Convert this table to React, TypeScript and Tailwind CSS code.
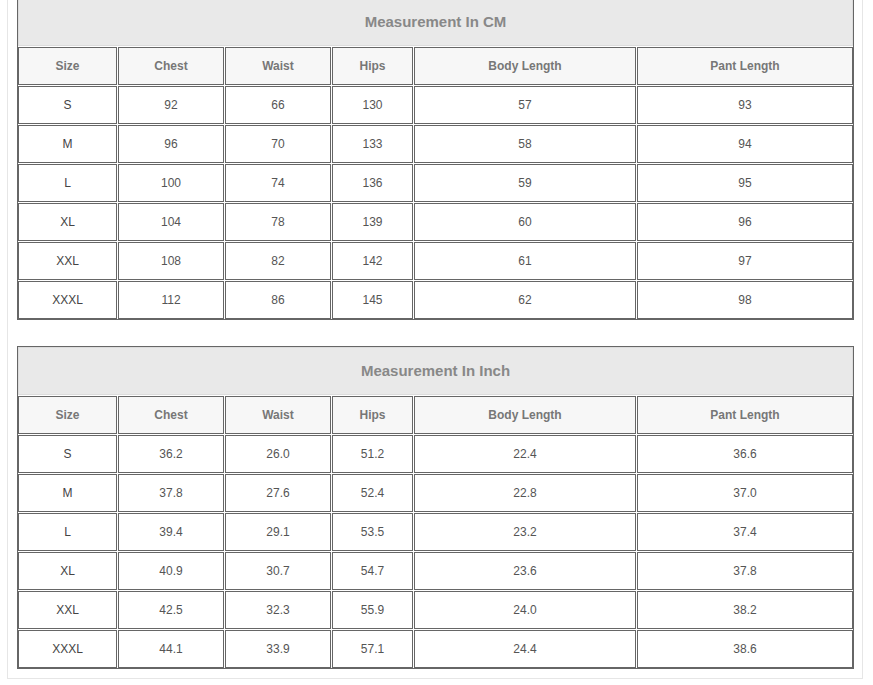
import React from "react";

const headers = ["Size", "Chest", "Waist", "Hips", "Body Length", "Pant Length"];

const cm: string[][] = [
  ["S", "92", "66", "130", "57", "93"],
  ["M", "96", "70", "133", "58", "94"],
  ["L", "100", "74", "136", "59", "95"],
  ["XL", "104", "78", "139", "60", "96"],
  ["XXL", "108", "82", "142", "61", "97"],
  ["XXXL", "112", "86", "145", "62", "98"],
];

const inch: string[][] = [
  ["S", "36.2", "26.0", "51.2", "22.4", "36.6"],
  ["M", "37.8", "27.6", "52.4", "22.8", "37.0"],
  ["L", "39.4", "29.1", "53.5", "23.2", "37.4"],
  ["XL", "40.9", "30.7", "54.7", "23.6", "37.8"],
  ["XXL", "42.5", "32.3", "55.9", "24.0", "38.2"],
  ["XXXL", "44.1", "33.9", "57.1", "24.4", "38.6"],
];

function SizeTable({ title, rows }: { title: string; rows: string[][] }) {
  return (
    <div className="grid grid-cols-[99px_106px_106px_81px_222px_216px] gap-px border border-[#666] bg-white w-[837px]">
      <div className="col-span-6 h-[48px] border border-[#dcdcdc] bg-[#e9e9e9] flex items-center justify-center text-[15px] font-bold text-[#888]">
        {title}
      </div>
      {headers.map((h) => (
        <div
          key={h}
          className="h-[38px] border border-[#666] bg-[#f7f7f7] flex items-center justify-center text-[12px] font-bold text-[#777]"
        >
          {h}
        </div>
      ))}
      {rows.map((r, i) =>
        r.map((c, j) => (
          <div
            key={i + "-" + j}
            className={
              "h-[38px] border border-[#666] bg-white flex items-center justify-center text-[12px] " +
              (j === 0 ? "text-[#444]" : "text-[#555]")
            }
          >
            {c}
          </div>
        ))
      )}
    </div>
  );
}

export default function App() {
  return (
    <div
      className="w-[873px] h-[685px] overflow-hidden bg-white pl-[7px]"
      style={{ fontFamily: '"Liberation Sans", Arial, sans-serif' }}
    >
      <div className="-mt-[4px] w-[856px] border border-[#e6e6e6] pl-[9px] pb-[9px] flex flex-col gap-[26px]">
        <SizeTable title="Measurement In CM" rows={cm} />
        <SizeTable title="Measurement In Inch" rows={inch} />
      </div>
    </div>
  );
}
